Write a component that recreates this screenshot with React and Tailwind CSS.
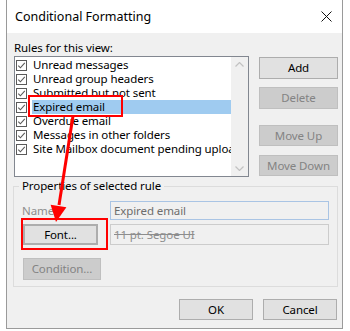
import React from 'react';

const rules = [
  'Unread messages',
  'Unread group headers',
  'Submitted but not sent',
  'Expired email',
  'Overdue email',
  'Messages in other folders',
  'Site Mailbox document pending upload',
];

function CheckBox() {
  return (
    <svg width="11" height="11" viewBox="0 0 11 11" className="shrink-0">
      <rect x="0.5" y="0.5" width="10" height="10" fill="#fff" stroke="#5a5a5a" />
      <path d="M2.3 5.6 L4.4 7.8 L8.8 2.8" fill="none" stroke="#5a5a5a" strokeWidth="1.1" />
    </svg>
  );
}

function Btn({ children, disabled, focused, className = '' }) {
  const base = disabled
    ? 'bg-[#cccccc] border-[#bfbfbf] text-[#838383]'
    : 'bg-[#e1e1e1] border-[#adadad] text-black';
  const ring = focused ? 'border-2 border-[#0078d7]' : 'border';
  return (
    <div className={`flex items-center justify-center ${ring} ${base} ${className}`}>
      {children}
    </div>
  );
}

export default function App() {
  return (
    <div className="w-[350px] h-[331px] bg-white text-[11.5px] leading-[14px] tracking-[-0.1px] text-black" style={{ fontFamily: '"Noto Sans", "Open Sans", sans-serif' }}>
      <div className="relative ml-[6px] w-[337px] h-[329px] border-x border-b border-[#9a9a9a] bg-[#f0f0f0] flex flex-col">
        {/* Title bar */}
        <div className="h-[33px] bg-white flex items-center justify-between pl-[8px] pr-[10px]">
          <span className="text-[12.5px] tracking-normal">Conditional Formatting</span>
          <svg width="11" height="11" viewBox="0 0 11 11">
            <path d="M0.5 0.5 L10.5 10.5 M10.5 0.5 L0.5 10.5" stroke="#111" strokeWidth="1" />
          </svg>
        </div>

        {/* Rules */}
        <div className="pl-[7px] pt-[7px]">
          <div className="h-[16px] leading-[16px]">Rules for this view:</div>
          <div className="flex">
            <div className="w-[235px] h-[121px] border border-[#828790] bg-white flex">
              <div className="flex-1 pt-[1px] overflow-hidden">
                {rules.map((r, i) => (
                  <div key={r} className="h-[14px] flex items-center pl-[1px]">
                    <CheckBox />
                    <div className={`ml-[5px] h-[14px] flex-1 pl-[1px] whitespace-nowrap overflow-hidden leading-[14px] ${i === 3 ? 'bg-[#9fcbf0]' : ''}`}>
                      {r}
                    </div>
                  </div>
                ))}
              </div>
              <div className="w-[17px] bg-[#f0f0f0] flex flex-col items-center justify-between py-[5px]">
                <svg width="9" height="5" viewBox="0 0 9 5">
                  <path d="M0.5 4.5 L4.5 0.5 L8.5 4.5" fill="none" stroke="#c2c2c2" strokeWidth="1.2" />
                </svg>
                <svg width="9" height="5" viewBox="0 0 9 5">
                  <path d="M0.5 0.5 L4.5 4.5 L8.5 0.5" fill="none" stroke="#c2c2c2" strokeWidth="1.2" />
                </svg>
              </div>
            </div>
            <div className="ml-[10px] pt-[1px] flex flex-col">
              <Btn className="w-[79px] h-[22px]">Add</Btn>
              <Btn disabled className="w-[79px] h-[22px] mt-[8px]">Delete</Btn>
              <Btn disabled className="w-[79px] h-[21px] mt-[16px]">Move Up</Btn>
              <Btn disabled className="w-[79px] h-[21px] mt-[9px]">Move Down</Btn>
            </div>
          </div>
        </div>

        {/* Properties group */}
        <div className="relative ml-[6px] mt-[9px] w-[325px] h-[101px] border border-[#dcdcdc]">
          <span className="absolute left-[5px] top-[-8px] px-[3px] bg-[#f0f0f0]">Properties of selected rule</span>
          <div className="flex items-center mt-[14px] pl-[8px]">
            <span className="w-[88px] text-[#8d8d8d]">Name:</span>
            <div className="w-[219px] h-[19px] border border-[#a9c4e4] bg-[#f0f0f0] flex items-center pl-[3px] text-[#6d6d6d]">
              Expired email
            </div>
          </div>
          <div className="flex items-center mt-[4px] pl-[9px]">
            <Btn focused className="w-[75px] h-[21px]">Font...</Btn>
            <div className="ml-[12px] w-[219px] h-[21px] border border-[#cccccc] bg-[#f0f0f0] flex items-center pl-[3px] text-[#8d8d8d] line-through">
              11 pt. Segoe UI
            </div>
          </div>
          <div className="pl-[9px] mt-[13px]">
            <Btn disabled className="w-[78px] h-[22px]">Condition...</Btn>
          </div>
        </div>

        {/* Footer */}
        <div className="flex justify-end gap-[10px] mt-[12px] pr-[5px]">
          <Btn className="w-[74px] h-[21px]">OK</Btn>
          <Btn className="w-[74px] h-[21px]">Cancel</Btn>
        </div>

        {/* Annotations */}
        <div className="absolute left-[21px] top-[95px] w-[95px] h-[22px] border-2 border-[#ff0000]" />
        <div className="absolute left-[14px] top-[218px] w-[87px] h-[32px] border-2 border-[#ff0000]" />
        <svg className="absolute left-0 top-0 pointer-events-none" width="337" height="329" viewBox="6 0 337 329">
          <line x1="72" y1="116" x2="58" y2="205" stroke="#ff0000" strokeWidth="3" />
          <polygon points="49.6,204.7 65.4,207.3 55,222" fill="#ff0000" />
        </svg>
      </div>
    </div>
  );
}
